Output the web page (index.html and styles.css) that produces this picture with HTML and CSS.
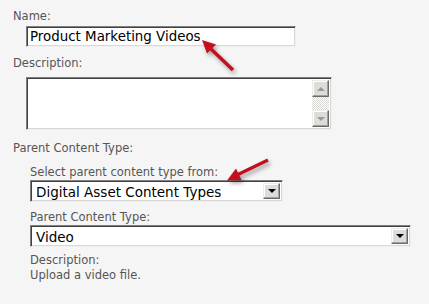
FILE: index.html
```html
<!DOCTYPE html>
<html lang="en">
<head>
  <meta charset="UTF-8">
  <meta name="viewport" content="width=device-width, initial-scale=1">
  <title>New Site Content Type</title>
  <link rel="stylesheet" href="styles.css">
</head>
<body>

  <div class="page">
    <div class="form">
      <div class="label">Name:</div>
      <div class="inset textbox name-box">Product Marketing Videos</div>

      <div class="label desc-label">Description:</div>
      <div class="inset textarea">
        <div class="scrollbar">
          <span class="sb-btn"><span class="tri tri-up"></span></span>
          <span class="sb-track"></span>
          <span class="sb-btn"><span class="tri tri-down"></span></span>
        </div>
      </div>

      <div class="label section-label">Parent Content Type:</div>
      <div class="section">
        <div class="label">Select parent content type from:</div>
        <div class="inset dropdown group-select">
          <span class="value">Digital Asset Content Types</span>
          <span class="dd-btn"><span class="tri tri-down dark"></span></span>
        </div>

        <div class="label sub-label">Parent Content Type:</div>
        <div class="inset dropdown type-select">
          <span class="value">Video</span>
          <span class="dd-btn"><span class="tri tri-down dark"></span></span>
        </div>

        <div class="label info-label">Description:</div>
        <div class="label">Upload a video file.</div>
      </div>
    </div>

    <!-- callout arrows drawn over the form -->
    <svg class="callouts" width="429" height="304" viewBox="0 0 429 304">
      <g class="arrow">
        <line x1="233" y1="70" x2="211" y2="49" />
        <polygon points="202,40 216,44.5 207,53.5" />
      </g>
      <g class="arrow">
        <line x1="268" y1="160" x2="238" y2="174.5" />
        <polygon points="227,180.5 241.5,180 236,168.5" />
      </g>
    </svg>
  </div>

</body>
</html>
```

FILE: styles.css
```css
* {
  box-sizing: border-box;
}

body {
  margin: 0;
  padding: 0;
  background: #f5f5f5;
  font-family: "DejaVu Sans", Verdana, sans-serif;
}

.page {
  position: relative;
  width: 429px;
  height: 304px;
  overflow: hidden;
}

.form {
  padding: 9px 0 0 13px;
}

.label {
  font-size: 11.5px;
  line-height: 15px;
  color: #555;
}

.inset {
  background: #fff;
  border: 1px solid;
  border-color: #808080 #f0f0f0 #f0f0f0 #808080;
  box-shadow: inset 1px 1px 0 #404040, inset -1px -1px 0 #d8d8d4;
}

.textbox {
  width: 270px;
  height: 21px;
  margin: 2px 0 0 13px;
  padding: 0 0 0 3px;
  font-size: 13.4px;
  line-height: 19px;
  color: #000;
}

.desc-label {
  margin-top: 9px;
}

.textarea {
  width: 306px;
  height: 53px;
  margin: 6px 0 0 13px;
  padding: 2px;
  display: flex;
  justify-content: flex-end;
}

.scrollbar {
  width: 17px;
  display: flex;
  flex-direction: column;
}

.sb-btn,
.dd-btn {
  display: flex;
  align-items: center;
  justify-content: center;
  background: #dcdcd8;
  border: 1px solid;
  border-color: #ecece8 #6a6a6a #6a6a6a #ecece8;
  box-shadow: inset -1px -1px 0 #a0a09c, inset 1px 1px 0 #fff;
}

.sb-btn {
  height: 17px;
}

.sb-track {
  flex: 1;
  background: repeating-conic-gradient(#d8d8d4 0 25%, #fff 0 50%) 0 0 / 2px 2px;
}

.tri {
  width: 0;
  height: 0;
  border-left: 4px solid transparent;
  border-right: 4px solid transparent;
}

.tri-up {
  border-bottom: 4px solid #9a9a9a;
}

.tri-down {
  border-top: 4px solid #9a9a9a;
}

.tri-down.dark {
  border-top-color: #000;
}

.section-label {
  margin-top: 11px;
}

.section {
  padding: 9px 0 0 17px;
}

.dropdown {
  height: 22px;
  padding: 2px;
  display: flex;
  align-items: stretch;
  font-size: 13.5px;
  color: #000;
}

.dropdown .value {
  flex: 1;
  padding-left: 3px;
  line-height: 18px;
}

.dd-btn {
  width: 17px;
}

.group-select {
  width: 253px;
}

.type-select {
  width: 381px;
}

.sub-label {
  margin-top: 8px;
}

.info-label {
  margin-top: 6px;
}

.callouts {
  position: absolute;
  top: 0;
  left: 0;
  pointer-events: none;
}

.arrow {
  filter: drop-shadow(2px 3px 2px rgba(0, 0, 0, 0.35));
}

.arrow line {
  stroke: #c3101c;
  stroke-width: 3.5;
}

.arrow polygon {
  fill: #c3101c;
}
```
